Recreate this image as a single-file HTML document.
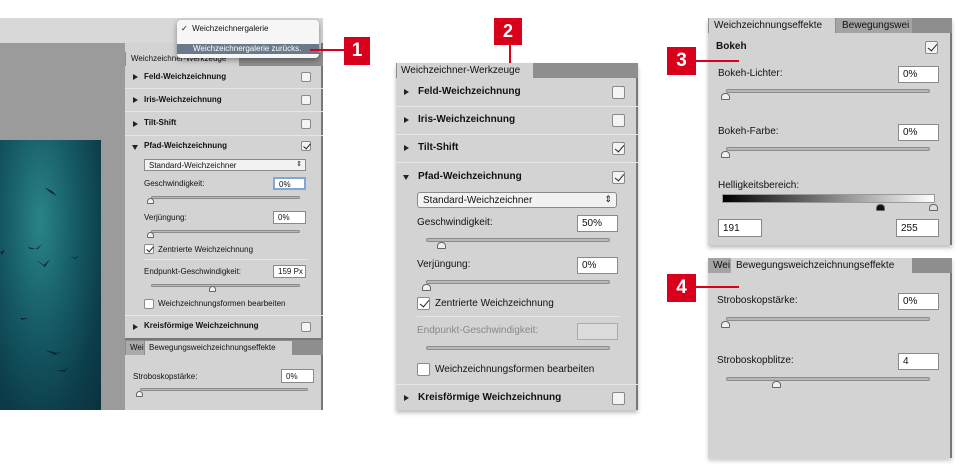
<!DOCTYPE html>
<html><head><meta charset="utf-8"><style>
*{margin:0;padding:0;box-sizing:border-box}
body{width:966px;height:472px;background:#fff;position:relative;overflow:hidden;font-family:"Liberation Sans",sans-serif;color:#111}
.a{position:absolute}
.t{position:absolute;white-space:nowrap;line-height:1}
.b{font-weight:bold}
.sep{position:absolute;height:1px;background:#b4b4b4;border-bottom:1px solid #e6e6e6}
.cb{position:absolute;background:#f4f4f4;border:1px solid #8a8a8a;border-radius:2px}
.in{position:absolute;background:#fff;border:1px solid #8a8a8a;line-height:1;padding-left:4px;white-space:nowrap}
.sl{position:absolute;height:4px;background:#b8b8b8;border:1px solid #8c8c8c;border-radius:3px}
.hd{position:absolute;width:9px;height:7px;background:#f0f0f0;border:1px solid #666;border-radius:4px 4px 1px 1px}
.mk{position:absolute;background:#d9001b;color:#fff;font-weight:bold;text-align:center}
.ln{position:absolute;background:#d9001b}
.tri{position:absolute;width:0;height:0}
.r{border-left:5px solid #222;border-top:3px solid transparent;border-bottom:3px solid transparent}
.d{border-top:5px solid #222;border-left:3px solid transparent;border-right:3px solid transparent}
.chk:after{content:"";position:absolute;left:4px;top:0px;width:4px;height:8px;border-right:1.5px solid #222;border-bottom:1.5px solid #222;transform:rotate(40deg)}
.chk.s:after{left:3px;top:0;width:3px;height:6px;border-right:1.2px solid #222;border-bottom:1.2px solid #222}
</style></head><body>

<!-- Panel 1 screenshot -->
<div class="a" style="left:0;top:18px;width:323px;height:25px;background:#d8d8d8"></div>
<div class="a" style="left:0;top:43px;width:125px;height:367px;background:#9b9b9b"></div>
<div class="a" style="left:0;top:140px;width:101px;height:270px;background:radial-gradient(ellipse at 40% 30%,#2a8487 0%,#165c66 40%,#0c3d4a 75%,#0a313d 100%)"></div>
<svg class="a" style="left:0;top:140px" width="101" height="270"><g fill="#0b2a30"><path d="M44 47l8 4 5 5-6-3z"/><path d="M28 107l8 2 6-5-4 5-8 0z"/><path d="M36 120l8 5 6-6-5 8z"/><path d="M68 116l6 2 5-2-4 3z"/><path d="M0 112l5-2-3 5z"/><path d="M20 178l8 0-6 2z"/><path d="M45 210l12 3 6-2-8 4z"/><path d="M56 230l8 0 5-3-5 5z"/></g></svg>
<div class="a" style="left:125px;top:43px;width:198px;height:367px;background:#d3d3d3;border-right:2px solid #777"></div>
<div class="a" style="left:125px;top:52px;width:198px;height:14px;background:#8e8e8e"></div>
<div class="a" style="left:126px;top:52px;width:113px;height:14px;background:#d3d3d3"></div>
<div class="t" style="left:131px;top:55px;font-size:8px">Weichzeichner-Werkzeuge</div>
<div class="tri r" style="left:133px;top:74px"></div><div class="t b" style="left:144px;top:73px;font-size:8px">Feld-Weichzeichnung</div><div class="cb" style="left:301px;top:72px;width:10px;height:10px"></div>
<div class="sep" style="left:125px;top:88px;width:198px"></div>
<div class="tri r" style="left:133px;top:97px"></div><div class="t b" style="left:144px;top:96px;font-size:8px">Iris-Weichzeichnung</div><div class="cb" style="left:301px;top:95px;width:10px;height:10px"></div>
<div class="sep" style="left:125px;top:111px;width:198px"></div>
<div class="tri r" style="left:133px;top:121px"></div><div class="t b" style="left:144px;top:119px;font-size:8px">Tilt-Shift</div><div class="cb" style="left:301px;top:119px;width:10px;height:10px"></div>
<div class="sep" style="left:125px;top:135px;width:198px"></div>
<div class="tri d" style="left:132px;top:145px"></div><div class="t b" style="left:144px;top:142px;font-size:8px">Pfad-Weichzeichnung</div><div class="cb chk s" style="left:301px;top:141px;width:10px;height:10px"></div>
<div class="in" style="left:144px;top:159px;width:162px;height:12px;font-size:8px;padding-top:2px;background:#f2f2f2">Standard-Weichzeichner<span style="position:absolute;right:3px;top:1px;font-size:7px">⇕</span></div>
<div class="t" style="left:144px;top:180px;font-size:8px">Geschwindigkeit:</div>
<div class="in" style="left:273px;top:177px;width:33px;height:13px;font-size:8px;padding-top:2px;border:2px solid #7fa6d6">0%</div>
<div class="sl" style="left:151px;top:196px;width:149px;height:3px"></div><div class="hd" style="left:147px;top:198px;width:7px;height:6px"></div>
<div class="t" style="left:144px;top:214px;font-size:8px">Verjüngung:</div>
<div class="in" style="left:273px;top:211px;width:33px;height:13px;font-size:8px;padding-top:2px">0%</div>
<div class="sl" style="left:151px;top:230px;width:149px;height:3px"></div><div class="hd" style="left:147px;top:232px;width:7px;height:6px"></div>
<div class="cb chk s" style="left:144px;top:244px;width:10px;height:10px;background:#fff"></div><div class="t" style="left:158px;top:246px;font-size:8px">Zentrierte Weichzeichnung</div>
<div class="sep" style="left:144px;top:259px;width:163px"></div>
<div class="t" style="left:144px;top:268px;font-size:8px">Endpunkt-Geschwindigkeit:</div>
<div class="in" style="left:273px;top:265px;width:33px;height:13px;font-size:8px;padding-top:2px">159 Px</div>
<div class="sl" style="left:151px;top:284px;width:149px;height:3px"></div><div class="hd" style="left:209px;top:286px;width:7px;height:6px"></div>
<div class="cb" style="left:144px;top:299px;width:10px;height:10px;background:#fff"></div><div class="t" style="left:158px;top:300px;font-size:8px">Weichzeichnungsformen bearbeiten</div>
<div class="sep" style="left:125px;top:315px;width:198px"></div>
<div class="tri r" style="left:133px;top:324px"></div><div class="t b" style="left:144px;top:322px;font-size:8px">Kreisförmige Weichzeichnung</div><div class="cb" style="left:301px;top:322px;width:10px;height:10px"></div>
<div class="a" style="left:125px;top:338px;width:198px;height:17px;background:#8e8e8e;border-top:2px solid #777"></div>
<div class="a" style="left:126px;top:341px;width:18px;height:14px;background:#aaa"></div>
<div class="t" style="left:130px;top:344px;font-size:8px">Wei</div>
<div class="a" style="left:145px;top:341px;width:147px;height:14px;background:#d3d3d3"></div>
<div class="t" style="left:149px;top:344px;font-size:8px">Bewegungsweichzeichnungseffekte</div>
<div class="t" style="left:133px;top:373px;font-size:8px">Stroboskopstärke:</div>
<div class="in" style="left:281px;top:369px;width:33px;height:14px;font-size:8px;padding-top:3px">0%</div>
<div class="sl" style="left:140px;top:388px;width:168px;height:3px"></div><div class="hd" style="left:136px;top:391px;width:7px;height:6px"></div>
<!-- dropdown menu -->
<div class="a" style="left:177px;top:20px;width:142px;height:38px;background:#f6f6f6;border-radius:4px;box-shadow:0 2px 6px rgba(0,0,0,.4)"></div>
<div class="t" style="left:181px;top:25px;font-size:8px">✓ &nbsp;Weichzeichnergalerie</div>
<div class="a" style="left:177px;top:44px;width:142px;height:10px;background:#6a7a8c"></div>
<div class="t" style="left:193px;top:45px;font-size:8px;color:#fff">Weichzeichnergalerie zurücks.</div>
<div class="ln" style="left:310px;top:49px;width:36px;height:2px"></div>
<div class="mk" style="left:344px;top:37px;width:26px;height:28px;font-size:19px;line-height:28px">1</div>

<!-- Panel 2 -->
<div class="mk" style="left:494px;top:18px;width:28px;height:27px;font-size:18px;line-height:27px">2</div>
<div class="ln" style="left:509px;top:45px;width:2px;height:18px"></div>
<div class="a" style="left:396px;top:63px;width:242px;height:347px;background:#d3d3d3;border-right:2px solid #777;box-shadow:0 3px 4px rgba(0,0,0,.25)"></div>
<div class="a" style="left:396px;top:63px;width:242px;height:15px;background:#8e8e8e"></div>
<div class="a" style="left:397px;top:63px;width:136px;height:16px;background:#d3d3d3"></div>
<div class="t" style="left:401px;top:66px;font-size:10px">Weichzeichner-Werkzeuge</div>
<div class="tri r" style="left:404px;top:89px"></div><div class="t b" style="left:418px;top:87px;font-size:10px">Feld-Weichzeichnung</div><div class="cb" style="left:612px;top:86px;width:13px;height:13px"></div>
<div class="sep" style="left:396px;top:106px;width:242px"></div>
<div class="tri r" style="left:404px;top:117px"></div><div class="t b" style="left:418px;top:115px;font-size:10px">Iris-Weichzeichnung</div><div class="cb" style="left:612px;top:114px;width:13px;height:13px"></div>
<div class="sep" style="left:396px;top:134px;width:242px"></div>
<div class="tri r" style="left:404px;top:145px"></div><div class="t b" style="left:418px;top:143px;font-size:10px">Tilt-Shift</div><div class="cb chk" style="left:612px;top:142px;width:13px;height:13px"></div>
<div class="sep" style="left:396px;top:162px;width:242px"></div>
<div class="tri d" style="left:403px;top:175px"></div><div class="t b" style="left:418px;top:172px;font-size:10px">Pfad-Weichzeichnung</div><div class="cb chk" style="left:612px;top:171px;width:13px;height:13px"></div>
<div class="in" style="left:417px;top:192px;width:200px;height:16px;font-size:10px;padding-top:3px;padding-left:5px;background:#f2f2f2;border-radius:3px">Standard-Weichzeichner<span style="position:absolute;right:4px;top:2px;font-size:9px">⇕</span></div>
<div class="t" style="left:417px;top:218px;font-size:10px">Geschwindigkeit:</div>
<div class="in" style="left:577px;top:215px;width:41px;height:17px;font-size:10px;padding-top:3px">50%</div>
<div class="sl" style="left:426px;top:238px;width:184px"></div><div class="hd" style="left:437px;top:242px"></div>
<div class="t" style="left:417px;top:260px;font-size:10px">Verjüngung:</div>
<div class="in" style="left:577px;top:257px;width:41px;height:17px;font-size:10px;padding-top:3px">0%</div>
<div class="sl" style="left:426px;top:280px;width:184px"></div><div class="hd" style="left:422px;top:284px"></div>
<div class="cb chk" style="left:417px;top:297px;width:13px;height:13px;background:#fff"></div><div class="t" style="left:435px;top:299px;font-size:10px">Zentrierte Weichzeichnung</div>
<div class="sep" style="left:417px;top:316px;width:202px"></div>
<div class="t" style="left:417px;top:326px;font-size:10px;color:#888">Endpunkt-Geschwindigkeit:</div>
<div class="in" style="left:577px;top:323px;width:41px;height:17px;background:#dcdcdc;border-color:#aaa"></div>
<div class="sl" style="left:426px;top:346px;width:184px"></div>
<div class="cb" style="left:417px;top:363px;width:13px;height:13px;background:#fff"></div><div class="t" style="left:435px;top:365px;font-size:10px">Weichzeichnungsformen bearbeiten</div>
<div class="sep" style="left:396px;top:384px;width:242px"></div>
<div class="tri r" style="left:404px;top:395px"></div><div class="t b" style="left:418px;top:393px;font-size:10px">Kreisförmige Weichzeichnung</div><div class="cb" style="left:612px;top:392px;width:13px;height:13px"></div>

<!-- Panel 3 -->
<div class="a" style="left:708px;top:18px;width:244px;height:227px;background:#d3d3d3;border-right:2px solid #777;box-shadow:0 3px 4px rgba(0,0,0,.25)"></div>
<div class="a" style="left:708px;top:18px;width:244px;height:15px;background:#8e8e8e"></div>
<div class="a" style="left:836px;top:18px;width:76px;height:15px;background:#a4a4a4"></div>
<div class="a" style="left:709px;top:18px;width:126px;height:16px;background:#d3d3d3"></div>
<div class="t" style="left:714px;top:21px;font-size:10px">Weichzeichnungseffekte</div>
<div class="t" style="left:842px;top:21px;font-size:10px">Bewegungswei</div>
<div class="t b" style="left:716px;top:42px;font-size:10px">Bokeh</div>
<div class="cb chk" style="left:925px;top:41px;width:13px;height:13px"></div>
<div class="mk" style="left:667px;top:47px;width:29px;height:28px;font-size:19px;line-height:28px">3</div>
<div class="ln" style="left:696px;top:60px;width:43px;height:2px"></div>
<div class="t" style="left:718px;top:69px;font-size:10px">Bokeh-Lichter:</div>
<div class="in" style="left:898px;top:66px;width:41px;height:17px;font-size:10px;padding-top:3px">0%</div>
<div class="sl" style="left:726px;top:89px;width:204px"></div><div class="hd" style="left:721px;top:93px"></div>
<div class="t" style="left:718px;top:127px;font-size:10px">Bokeh-Farbe:</div>
<div class="in" style="left:898px;top:124px;width:41px;height:17px;font-size:10px;padding-top:3px">0%</div>
<div class="sl" style="left:726px;top:147px;width:204px"></div><div class="hd" style="left:721px;top:151px"></div>
<div class="t" style="left:718px;top:181px;font-size:10px">Helligkeitsbereich:</div>
<div class="a" style="left:722px;top:194px;width:213px;height:9px;background:linear-gradient(to right,#000,#fff);border:1px solid #999"></div>
<div class="hd" style="left:876px;top:204px;background:#111"></div><div class="hd" style="left:929px;top:204px;background:#ddd"></div>
<div class="in" style="left:718px;top:219px;width:44px;height:18px;font-size:10px;padding-top:4px">191</div>
<div class="in" style="left:896px;top:219px;width:43px;height:18px;font-size:10px;padding-top:4px">255</div>

<!-- Panel 4 -->
<div class="a" style="left:708px;top:258px;width:244px;height:200px;background:#d3d3d3;border-right:2px solid #777;box-shadow:0 3px 4px rgba(0,0,0,.2)"></div>
<div class="a" style="left:708px;top:258px;width:244px;height:15px;background:#8e8e8e"></div>
<div class="a" style="left:708px;top:258px;width:23px;height:15px;background:#a4a4a4"></div>
<div class="t" style="left:713px;top:261px;font-size:10px">Wei</div>
<div class="a" style="left:731px;top:258px;width:181px;height:16px;background:#d3d3d3"></div>
<div class="t" style="left:736px;top:261px;font-size:10px">Bewegungsweichzeichnungseffekte</div>
<div class="mk" style="left:667px;top:274px;width:29px;height:28px;font-size:19px;line-height:28px">4</div>
<div class="ln" style="left:696px;top:286px;width:43px;height:2px"></div>
<div class="t" style="left:717px;top:296px;font-size:10px">Stroboskopstärke:</div>
<div class="in" style="left:898px;top:293px;width:41px;height:17px;font-size:10px;padding-top:3px">0%</div>
<div class="sl" style="left:726px;top:317px;width:204px"></div><div class="hd" style="left:721px;top:321px"></div>
<div class="t" style="left:717px;top:356px;font-size:10px">Stroboskopblitze:</div>
<div class="in" style="left:898px;top:353px;width:41px;height:17px;font-size:10px;padding-top:3px">4</div>
<div class="sl" style="left:726px;top:377px;width:204px"></div><div class="hd" style="left:772px;top:381px"></div>
</body></html>
